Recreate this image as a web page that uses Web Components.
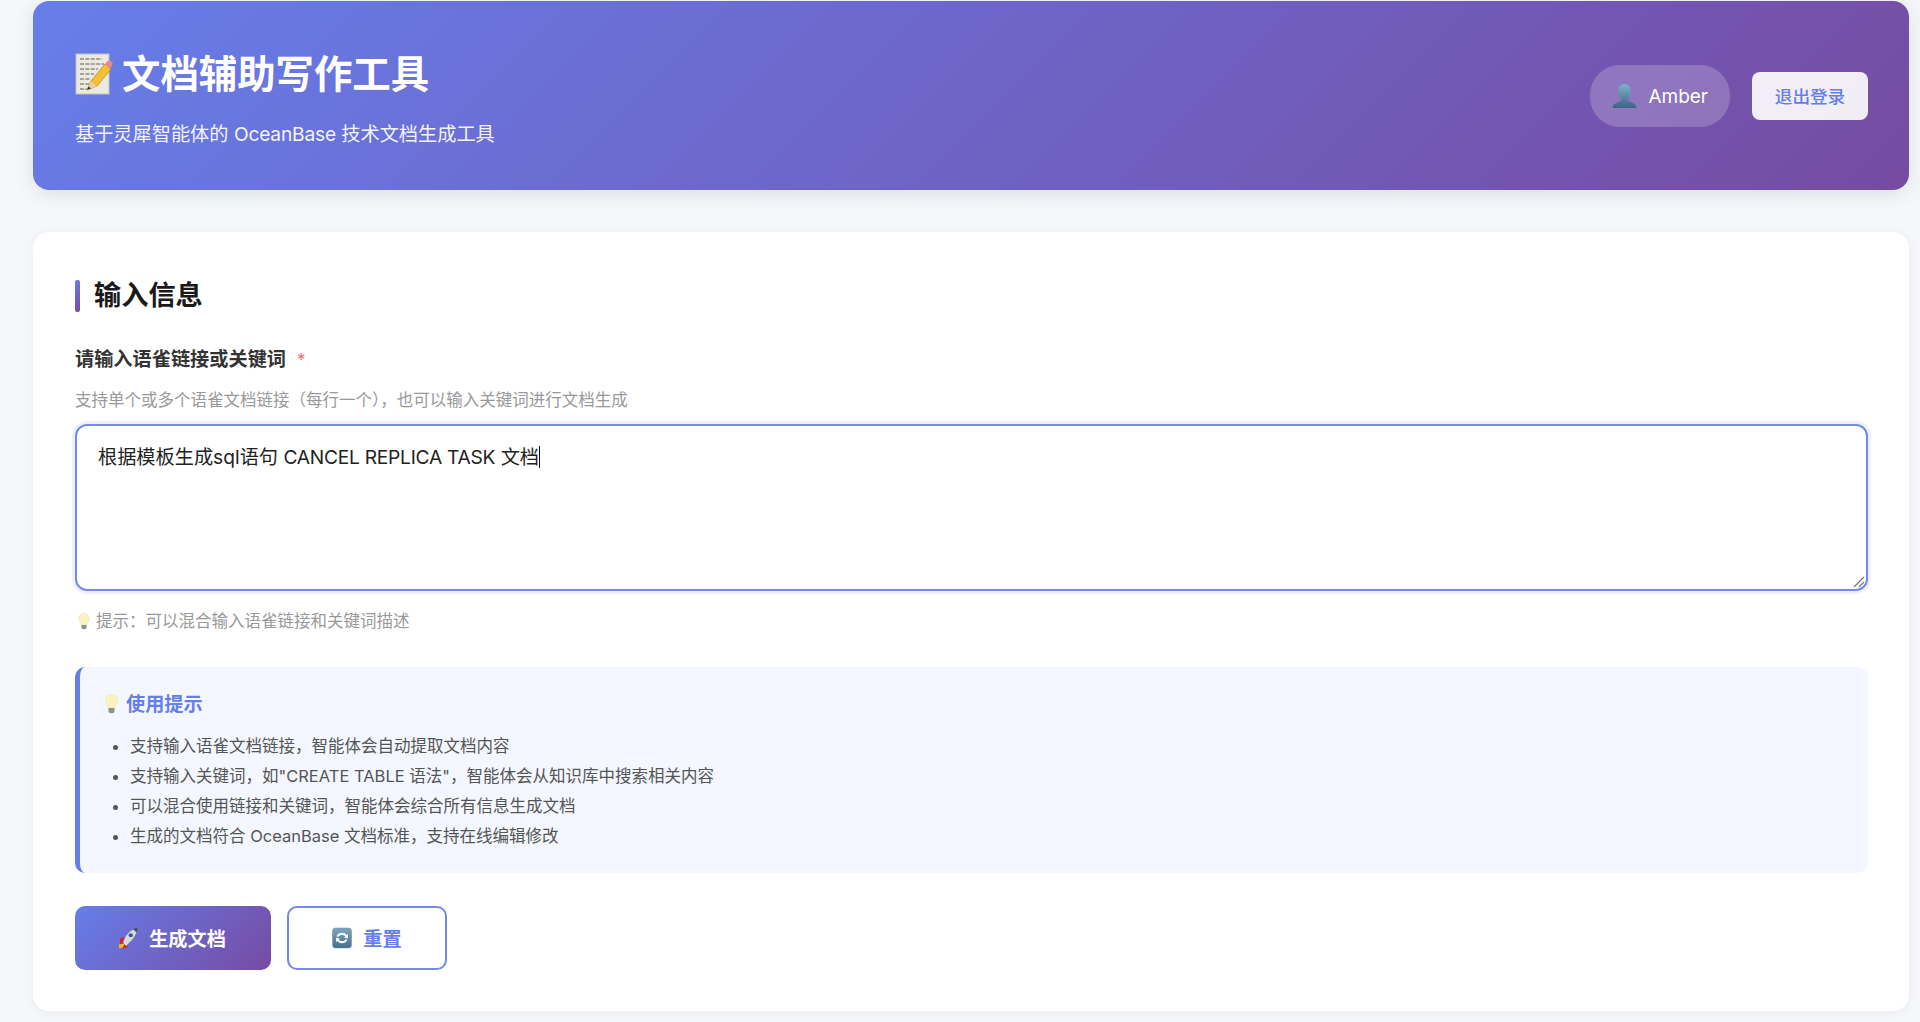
<!DOCTYPE html>
<html lang="zh-CN">
<head>
<meta charset="utf-8">
<title>文档辅助写作工具</title>
<style>
  html, body { margin: 0; height: 100%; background: #f5f7fa; overflow: hidden; }
  body { font-family: Inter, "Noto Sans CJK SC", sans-serif; color: #222; }
</style>
</head>
<body>
<app-shell>
  <app-header slot="header"></app-header>
  <input-card slot="main"></input-card>
</app-shell>

<script>
"use strict";

const EMOJI = {
  memo: `<svg viewBox="0 0 38 42" width="100%" height="100%">
      <rect x="1" y="1" width="33" height="40" fill="#ebe9e0" stroke="#c4c1b6" stroke-width="1"/>
      <g stroke="#5d5d58" stroke-width="1" fill="none" stroke-dasharray="4 1.4">
        <path d="M5 6h22M5 11h24M5 16h18M5 21h14M5 26h10M5 31h9M5 36h7"/>
      </g>
      <path d="M12 37l4-9L30 11l6 5-14 17z" fill="#f4bf30" stroke="#b5851a" stroke-width=".7"/>
      <path d="M16 28l6 5" stroke="#e0a21c" stroke-width="1"/>
      <path d="M12 37l4-9 6 5z" fill="#e9cfa0"/>
      <path d="M12 37l1.6-3.6 2.4 2z" fill="#333"/>
      <path d="M30 11l2-2.6c1-1.2 2.6-1.3 3.8-.3l.8.7c1.2 1 1.3 2.600.3 3.800L35 16z" fill="#e98a8a"/>
    </svg>`,
  bust: `<svg viewBox="0 0 28 28" width="100%" height="100%">
      <defs><linearGradient id="b" x1="0" y1="0" x2="0" y2="1">
        <stop offset="0" stop-color="#7fb3cc"/><stop offset="1" stop-color="#3a6385"/>
      </linearGradient></defs>
      <path d="M14 1c4.400 0 6.600 3.400 6.600 7.400 0 3.200-1.400 6-3 7.600-.6.8-.4 2 .6 2.600 2.600 1.400 6.800 2.400 8 5.400.4 1-.2 2-1.400 2H3.200c-1.200 0-1.800-1-1.400-2 1.200-3 5.400-4 8-5.400 1-.6 1.200-1.800.6-2.600-1.600-1.600-3-4.400-3-7.600C7.400 4.400 9.600 1 14 1z" fill="url(#b)"/>
    </svg>`,
  bulb: `<svg viewBox="0 0 14 20" width="100%" height="100%">
      <path d="M7 .6C3.400.6 1 3.200 1 6.400c0 3 2.200 4.600 2.800 7.600h6.400C10.800 11 13 9.400 13 6.400 13 3.200 10.600.6 7 .6z" fill="#fdf3c0" stroke="#efe0a0" stroke-width=".6"/>
      <path d="M4 14h6v3.200c0 1-.8 2-3 2s-3-1-3-2z" fill="#8f9092"/>
    </svg>`,
  rocket: `<svg viewBox="0 0 22 24" width="100%" height="100%">
      <path d="M1.500 23.500c-1.200-3.500-.2-6.500 2.500-7.500l3.500 3.500c-1 2.800-3.200 3.600-6 4z" fill="#f5b71f"/>
      <path d="M2.500 12.500l5-2-2 7.500-3.500 1z" fill="#d81f26"/>
      <path d="M11.500 16.500l-.5 5-6 2.500 1.500-4z" fill="#d81f26"/>
      <path d="M5.500 17.500C6.500 10.500 12 3 21.500 .8c-.4 9.500-7 14.700-12.500 20.200z" fill="#d5d9e2" stroke="#6d7588" stroke-width=".8"/>
      <path d="M16.500 2.200C18.200 1.600 19.800 1.100 21.500 .8c-.1 1.900-.5 3.600-1.100 5.200z" fill="#414f6c"/>
      <circle cx="14" cy="9" r="2.300" fill="#3d5a8c"/>
    </svg>`,
  refresh: `<svg viewBox="0 0 20 22" width="100%" height="100%">
      <defs><linearGradient id="r" x1="0" y1="0" x2="0" y2="1">
        <stop offset="0" stop-color="#7ea6c0"/><stop offset="1" stop-color="#43708f"/>
      </linearGradient></defs>
      <rect x=".5" y="1" width="19" height="20" rx="3" fill="url(#r)" stroke="#6a8ba2" stroke-width=".5"/>
      <path d="M4.500 9.500C5.500 6.500 8 5.800 10 5.800c2 0 3.600.8 4.600 2.200l1.400-1v4.200l-4-.8 1.300-1c-.8-1-1.900-1.500-3.300-1.500-1.600 0-3 .5-3.600 1.800z" fill="#fff"/>
      <path d="M15.500 12.500c-1 3-3.500 3.700-5.500 3.700s-3.600-.8-4.600-2.200l-1.400 1v-4.200l4 .8-1.300 1c.8 1 1.900 1.500 3.300 1.500 1.600 0 3-.5 3.600-1.800z" fill="#fff"/>
    </svg>`
};

class EmojiIcon extends HTMLElement {
  constructor() {
    super();
    this.attachShadow({ mode: "open" });
  }

  connectedCallback() {
    const w = this.getAttribute("w") || "20";
    const h = this.getAttribute("h") || w;
    this.shadowRoot.innerHTML = `
      <style>
        :host { display: inline-block; flex: none; width: ${w}px; height: ${h}px; line-height: 0; }
      </style>
      ${EMOJI[this.getAttribute("name")] || ""}
    `;
  }
}
customElements.define("emoji-icon", EmojiIcon);

class AppShell extends HTMLElement {
  constructor() {
    super();
    this.attachShadow({ mode: "open" });
    this.shadowRoot.innerHTML = `
      <style>
        :host {
          display: flex;
          flex-direction: column;
          gap: 42px;
          padding: 1px 11px 0 33px;
        }
      </style>
      <slot name="header"></slot>
      <slot name="main"></slot>
    `;
  }
}
customElements.define("app-shell", AppShell);

class AppHeader extends HTMLElement {
  constructor() {
    super();
    this.attachShadow({ mode: "open" });
    this.shadowRoot.innerHTML = `
      <style>
        :host {
          display: flex;
          justify-content: space-between;
          align-items: center;
          height: 189px;
          padding: 0 41px 0 42px;
          box-sizing: border-box;
          border-radius: 16px;
          color: #fff;
          background: linear-gradient(135deg, #667eea 0%, #764ba2 100%);
          box-shadow: 0 4px 20px rgba(0, 0, 0, 0.1);
        }
        .brand { padding-top: 6px; }
        h1 {
          display: flex;
          align-items: center;
          gap: 9px;
          margin: 0 0 24px;
          font-size: 38.4px;
          line-height: 46px;
          font-weight: 700;
        }
        p { margin: 0; font-size: 19.2px; line-height: 26px; opacity: 0.92; }
        p b { font-weight: 400; letter-spacing: -0.2px; }
        .user { display: flex; align-items: center; gap: 22px; }
        .pill {
          display: flex;
          align-items: center;
          gap: 10px;
          height: 62px;
          padding: 2px 22px 0 21px;
          box-sizing: border-box;
          border-radius: 30px;
          background: rgba(255, 255, 255, 0.2);
          font-size: 19px;
          font-weight: 400;
        }
        button {
          width: 116px;
          height: 48px;
          padding: 0;
          border: 0;
          border-radius: 8px;
          background: rgba(255, 255, 255, 0.9);
          color: #667eea;
          font: 500 17.6px Inter, "Noto Sans CJK SC", sans-serif;
        }
      </style>
      <div class="brand">
        <h1><emoji-icon name="memo" w="38" h="42"></emoji-icon>文档辅助写作工具</h1>
        <p>基于灵犀智能体的 <b>OceanBase</b> 技术文档生成工具</p>
      </div>
      <div class="user">
        <div class="pill"><emoji-icon name="bust" w="27" h="27"></emoji-icon>Amber</div>
        <button>退出登录</button>
      </div>
    `;
  }
}
customElements.define("app-header", AppHeader);

class TipBox extends HTMLElement {
  constructor() {
    super();
    this.attachShadow({ mode: "open" });
    this.shadowRoot.innerHTML = `
      <style>
        :host {
          display: block;
          padding: 24px 24px 22px;
          border-left: 5px solid #667eea;
          border-radius: 10px;
          background: #f4f7ff;
        }
        h4 {
          display: flex;
          align-items: center;
          gap: 7px;
          margin: 0 0 14px;
          font-size: 19.2px;
          line-height: 26px;
          font-weight: 700;
          color: #667eea;
        }
        ::slotted(ul) { margin: 0; }
      </style>
      <h4><emoji-icon name="bulb" w="15" h="20"></emoji-icon>使用提示</h4>
      <slot></slot>
    `;
  }
}
customElements.define("tip-box", TipBox);

class ActionButton extends HTMLElement {
  constructor() {
    super();
    this.attachShadow({ mode: "open" });
    this.shadowRoot.innerHTML = `
      <style>
        :host {
          display: inline-flex;
          align-items: center;
          justify-content: center;
          gap: 11px;
          height: 64px;
          box-sizing: border-box;
          border-radius: 10px;
          font-size: 19.2px;
          font-weight: 600;
        }
        :host([variant="primary"]) {
          width: 196px;
          padding-right: 2px;
          color: #fff;
          background: linear-gradient(135deg, #667eea 0%, #764ba2 100%);
        }
        :host([variant="ghost"]) {
          width: 160px;
          color: #667eea;
          background: #fff;
          border: 2px solid #7389e8;
        }
      </style>
      <slot name="icon"></slot>
      <slot></slot>
    `;
  }
}
customElements.define("action-button", ActionButton);

class InputCard extends HTMLElement {
  constructor() {
    super();
    this.attachShadow({ mode: "open" });
    this.shadowRoot.innerHTML = `
      <style>
        :host {
          display: block;
          padding: 48px 41px 41px 42px;
          border-radius: 16px;
          background: #fff;
          box-shadow: 0 2px 12px rgba(0, 0, 0, 0.05);
        }
        h2 {
          margin: 0 0 34px;
          height: 32px;
          padding-left: 19px;
          font-size: 27.2px;
          line-height: 32px;
          font-weight: 700;
          color: #1a1a1a;
          position: relative;
        }
        h2::before {
          content: "";
          position: absolute;
          left: 0;
          top: 0;
          width: 5px;
          height: 32px;
          border-radius: 2px;
          background: linear-gradient(135deg, #667eea, #764ba2);
        }
        .label {
          font-size: 19.2px;
          line-height: 26px;
          font-weight: 600;
          color: #333;
          margin-bottom: 16px;
        }
        .label span { color: #f56c6c; margin-left: 11px; font-weight: 400; font-size: 17px; }
        .help, .hint { font-size: 16.5px; line-height: 22px; color: #999; }
        .help { margin-bottom: 13px; }
        .hint { display: flex; align-items: center; gap: 6px; margin: 19px 0 35px 3px; }
        .field {
          position: relative;
          height: 167px;
          box-sizing: border-box;
          padding: 19px 21px;
          border: 2px solid #7389e8;
          border-radius: 12px;
          box-shadow: 0 0 0 3px rgba(102, 126, 234, 0.1);
          font-size: 19.2px;
          line-height: 24px;
          color: #222;
        }
        .field b { font-weight: 400; letter-spacing: -0.26px; }
        .caret { display: inline-block; width: 1px; height: 22px; background: #111; vertical-align: -4px; }
        .grip { position: absolute; right: 1px; bottom: 1px; width: 12px; height: 12px; }
        ul {
          padding-left: 26px;
          font-size: 16.5px;
          line-height: 30px;
          color: #555;
        }
        .actions { display: flex; gap: 16px; margin-top: 33px; }
      </style>
      <h2>输入信息</h2>
      <div class="label">请输入语雀链接或关键词<span>*</span></div>
      <div class="help">支持单个或多个语雀文档链接（每行一个），也可以输入关键词进行文档生成</div>
      <div class="field">根据模板生成sql语句 <b>CANCEL REPLICA TASK</b> 文档<span class="caret"></span>
        <svg class="grip" viewBox="0 0 12 12"><path d="M1 11L11 1M6 11l5-5" stroke="#777" stroke-width="1.200" fill="none"/></svg>
      </div>
      <div class="hint"><emoji-icon name="bulb" w="12" h="17"></emoji-icon>提示：可以混合输入语雀链接和关键词描述</div>
      <tip-box>
        <ul>
          <li>支持输入语雀文档链接，智能体会自动提取文档内容</li>
          <li>支持输入关键词，如"CREATE TABLE 语法"，智能体会从知识库中搜索相关内容</li>
          <li>可以混合使用链接和关键词，智能体会综合所有信息生成文档</li>
          <li>生成的文档符合 OceanBase 文档标准，支持在线编辑修改</li>
        </ul>
      </tip-box>
      <div class="actions">
        <action-button variant="primary"><emoji-icon slot="icon" name="rocket" w="20" h="22"></emoji-icon>生成文档</action-button>
        <action-button variant="ghost"><emoji-icon slot="icon" name="refresh" w="20" h="22"></emoji-icon>重置</action-button>
      </div>
    `;
  }
}
customElements.define("input-card", InputCard);
</script>
</body>
</html>
